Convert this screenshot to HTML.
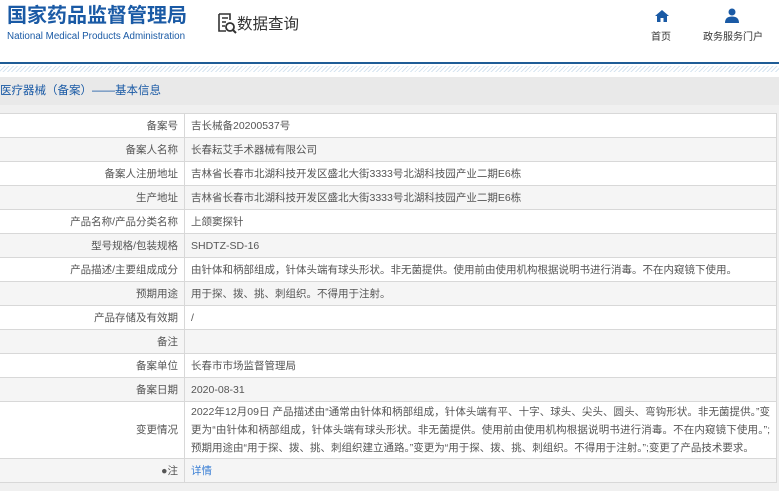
<!DOCTYPE html>
<html><head><meta charset="utf-8"><style>
*{margin:0;padding:0;box-sizing:border-box}
body{width:779px;height:491px;overflow:hidden;background:#fff;font-family:"Liberation Sans","Noto Sans CJK SC",sans-serif;color:#333;position:relative}
.hdr{position:absolute;left:0;top:0;width:779px;height:64px;background:#fff;border-bottom:2px solid #1e5c96}
.logo{position:absolute;left:7px;top:4px;font-size:20px;line-height:24px;font-weight:bold;color:#1a5aa5}
.en{position:absolute;left:7px;top:31px;font-size:9.8px;line-height:11px;color:#1a5aa5}
.sq{position:absolute;left:217px;top:12px;font-size:15.5px;line-height:22px;color:#333}
.nav{position:absolute;top:28px;font-size:10px;color:#333}
.hatch{position:absolute;left:0;top:66px;width:779px;height:6px;background:repeating-linear-gradient(135deg,#d6e4f0 0 1px,#fff 1px 3px)}
.bar{position:absolute;left:0;top:77px;width:779px;height:28px;background:#e9e9e9;font-size:11.5px;color:#1a5aa5;line-height:28px}
.bg{position:absolute;left:0;top:105px;width:779px;height:386px;background:#f0f0f0}
table{position:absolute;left:-1px;top:113px;width:778px;border-collapse:collapse;font-size:10.5px;color:#555}
td{border:1px solid #d8d8d8;height:24px;padding:0 6px;vertical-align:middle}
td.l{width:185px;text-align:right}
tr:nth-child(odd){background:#fff}
tr:nth-child(even){background:#f5f5f5}
.big td{height:57px;line-height:18px;text-align:justify}
.big td.l{text-align:right}
</style></head><body>
<div class="bg"></div>
<div class="hdr">
<div class="logo">国家药品监督管理局</div>
<div class="en">National Medical Products Administration</div>
<div class="sq"><svg width="20" height="22" viewBox="0 0 20 22" style="vertical-align:-5px"><path d="M2 2h11v6M2 2v17h7M5 6h6M5 10h4M5 14h3" fill="none" stroke="#333" stroke-width="1.6"/><circle cx="13" cy="15" r="4" fill="none" stroke="#333" stroke-width="1.8"/><path d="M16 18l3 3" stroke="#333" stroke-width="2"/></svg>数据查询</div>
<div class="nav" style="left:651px"><svg width="16" height="14" viewBox="0 0 16 14" style="position:absolute;left:3px;top:-19px"><path d="M8 1L1 7h2v6h3.5V9h3v4H13V7h2z" fill="#1a5aa5"/></svg>首页</div>
<div class="nav" style="left:703px"><svg width="16" height="16" viewBox="0 0 16 16" style="position:absolute;left:21px;top:-21px"><circle cx="8" cy="5" r="3.5" fill="#1a5aa5"/><path d="M1 16c0-5 3-6.5 7-6.5s7 1.5 7 6.5z" fill="#1a5aa5"/></svg>政务服务门户</div>
</div>
<div class="hatch"></div>
<div class="bar">医疗器械（备案）——基本信息</div>
<table>
<tr><td class="l">备案号</td><td>吉长械备20200537号</td></tr>
<tr><td class="l">备案人名称</td><td>长春耘艾手术器械有限公司</td></tr>
<tr><td class="l">备案人注册地址</td><td>吉林省长春市北湖科技开发区盛北大街3333号北湖科技园产业二期E6栋</td></tr>
<tr><td class="l">生产地址</td><td>吉林省长春市北湖科技开发区盛北大街3333号北湖科技园产业二期E6栋</td></tr>
<tr><td class="l">产品名称/产品分类名称</td><td>上颌窦探针</td></tr>
<tr><td class="l">型号规格/包装规格</td><td>SHDTZ-SD-16</td></tr>
<tr><td class="l">产品描述/主要组成成分</td><td>由针体和柄部组成，针体头端有球头形状。非无菌提供。使用前由使用机构根据说明书进行消毒。不在内窥镜下使用。</td></tr>
<tr><td class="l">预期用途</td><td>用于探、拨、挑、刺组织。不得用于注射。</td></tr>
<tr><td class="l">产品存储及有效期</td><td>/</td></tr>
<tr><td class="l">备注</td><td></td></tr>
<tr><td class="l">备案单位</td><td>长春市市场监督管理局</td></tr>
<tr><td class="l">备案日期</td><td>2020-08-31</td></tr>
<tr class="big"><td class="l">变更情况</td><td>2022年12月09日 产品描述由“通常由针体和柄部组成，针体头端有平、十字、球头、尖头、圆头、弯钩形状。非无菌提供。”变更为“由针体和柄部组成，针体头端有球头形状。非无菌提供。使用前由使用机构根据说明书进行消毒。不在内窥镜下使用。”;预期用途由“用于探、拨、挑、刺组织建立通路。”变更为“用于探、拨、挑、刺组织。不得用于注射。”;变更了产品技术要求。</td></tr>
<tr><td class="l">●注</td><td style="color:#3a7fd5">详情</td></tr>
</table>
</body></html>
